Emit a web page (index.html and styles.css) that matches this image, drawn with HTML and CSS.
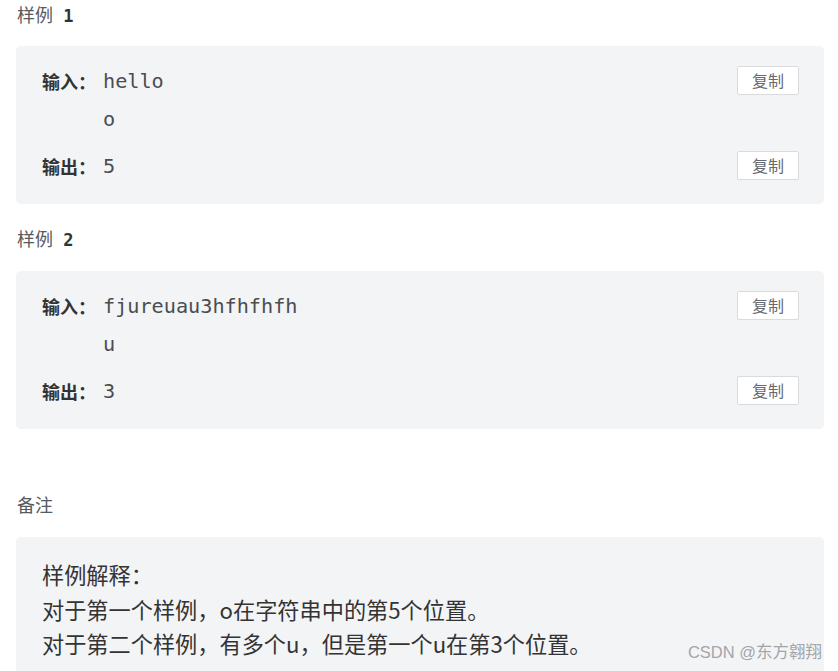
FILE: index.html
```html
<!DOCTYPE html>
<html lang="zh">
<head>
<meta charset="utf-8">
<link rel="stylesheet" href="styles.css">
</head>
<body>
<div class="page">
  <div class="heading heading-first">样例<span class="num"> 1</span></div>
  <div class="box sample">
    <div class="row">
      <div class="label">输入：</div>
      <div class="value">hello<br>o</div>
      <div class="btn">复制</div>
    </div>
    <div class="row row-out">
      <div class="label">输出：</div>
      <div class="value">5</div>
      <div class="btn">复制</div>
    </div>
  </div>

  <div class="heading">样例<span class="num"> 2</span></div>
  <div class="box sample">
    <div class="row">
      <div class="label">输入：</div>
      <div class="value">fjureuau3hfhfhfh<br>u</div>
      <div class="btn">复制</div>
    </div>
    <div class="row row-out">
      <div class="label">输出：</div>
      <div class="value">3</div>
      <div class="btn">复制</div>
    </div>
  </div>

  <div class="heading heading-note">备注</div>
  <div class="box note">
    <p>样例解释：</p>
    <p>对于第一个样例，o在字符串中的第5个位置。</p>
    <p>对于第二个样例，有多个u，但是第一个u在第3个位置。</p>
  </div>
  <div class="watermark">CSDN @东方翱翔</div>
</div>
</body>
</html>
```

FILE: styles.css
```css
html, body {
  margin: 0;
  padding: 0;
  background: #ffffff;
  overflow: hidden;
}
.page {
  position: relative;
  width: 808px;
  height: 671px;
  padding-left: 16px;
  font-family: "Noto Sans CJK SC", "Noto Sans", sans-serif;
  overflow: hidden;
}
.heading {
  height: 28px;
  line-height: 28px;
  font-size: 18px;
  color: #555a60;
  padding-left: 1px;
  margin-bottom: 19px;
}
.heading-first {
  margin-bottom: 18px;
}
.heading .num {
  font-family: "DejaVu Sans Mono", monospace;
  font-size: 17px;
  color: #333;
  font-weight: 600;
}
.heading-note {
  margin-top: 61px;
}
.box {
  background: #f3f4f6;
  border-radius: 5px;
  box-sizing: border-box;
}
.sample {
  padding: 16px 25px 19px 26px;
  margin-bottom: 20px;
}
.row {
  display: flex;
  align-items: flex-start;
}
.row-out {
  margin-top: 9px;
}
.label {
  width: 61px;
  line-height: 38px;
  font-size: 18px;
  font-weight: 700;
  color: #333;
}
.value {
  flex: 1;
  line-height: 38px;
  font-family: "DejaVu Sans Mono", monospace;
  font-size: 20.2px;
  color: #4a4d52;
}
.btn {
  margin-top: 4px;
  width: 60px;
  height: 27px;
  line-height: 27px;
  text-align: center;
  background: #ffffff;
  border: 1px solid #d9dbde;
  border-radius: 2px;
  font-size: 16px;
  color: #666a70;
}
.note {
  padding: 20px 26px 20px 26px;
  height: 140px;
}
.note p {
  margin: 0;
  line-height: 34.5px;
  font-size: 22.2px;
  color: #333;
}
.watermark {
  position: absolute;
  right: 2px;
  top: 641px;
  font-family: "Liberation Sans", "Noto Sans CJK SC", sans-serif;
  font-size: 16.5px;
  line-height: 22px;
  color: #a3a5a8;
}
```
